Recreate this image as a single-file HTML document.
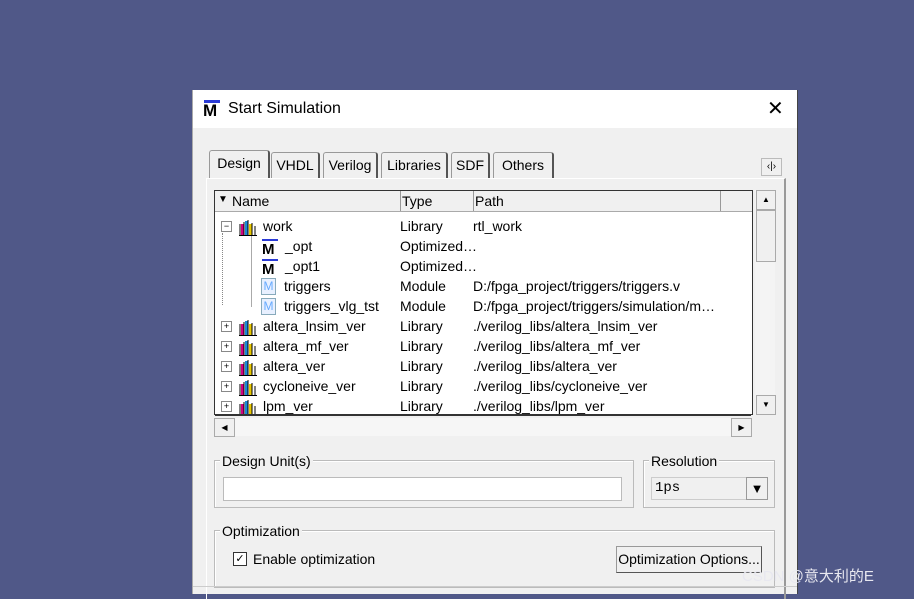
<!DOCTYPE html><html><head><style>
body{margin:0;width:914px;height:594px;background:#505888;position:relative;overflow:hidden;font-family:"Liberation Sans",sans-serif;font-size:14px;color:#000}
.a{position:absolute}
.dlg{left:192px;top:90px;width:604px;height:504px;background:#f0f0f0;border-left:1px solid #aaa;border-right:1px solid #444}
.title{left:0;top:0;width:604px;height:38px;background:#fff}
.tab{top:62px;height:26px;border:1px solid #999;border-bottom:none;border-right:2px solid #555;border-radius:3px 3px 0 0;background:#f0f0f0;text-align:center;line-height:24px;font-size:14px}
.row{height:20px;line-height:20px;white-space:nowrap}
.lib{display:inline-block;width:18px;height:16px;vertical-align:middle}
.grp{border:1px solid #bbb;box-shadow:inset 1px 1px #fff}
.lbl{background:#f0f0f0;padding:0 2px}
.pb{border:1px solid #888;background:#fff;width:9px;height:9px;font-size:9px;line-height:9px;text-align:center}
</style></head><body>
<div class="a dlg">
 <div class="a title">
  <div class="a" style="left:11px;top:10px;width:16px;height:3px;background:#2b3bd6"></div>
  <div class="a" style="left:10px;top:12px;font-weight:bold;font-size:17px;line-height:17px">M</div>
  <div class="a" style="left:35px;top:10px;font-size:16px">Start Simulation</div>
  <div class="a" style="left:574px;top:6px;font-size:20px">✕</div>
 </div>
 <div class="a tab" style="left:16px;width:58px;top:60px;height:28px;background:#f0f0f0">Design</div>
 <div class="a tab" style="left:78px;width:46px">VHDL</div>
 <div class="a tab" style="left:130px;width:52px">Verilog</div>
 <div class="a tab" style="left:188px;width:64px">Libraries</div>
 <div class="a tab" style="left:258px;width:36px">SDF</div>
 <div class="a tab" style="left:300px;width:58px">Others</div>
 <div class="a" style="left:568px;top:68px;width:19px;height:16px;border:1px solid #bbb;font-size:10px;line-height:16px;text-align:center">‹|›</div>
 <div class="a" style="left:13px;top:88px;width:577px;height:420px;border-left:1px solid #fff;border-top:1px solid #fff;border-right:2px solid #999"></div>
 <!-- list -->
 <div class="a" style="left:21px;top:100px;width:537px;height:223px;border:1px solid #333;background:#fff;overflow:hidden">
  <div class="a" style="left:0;top:0;width:537px;height:20px;background:#f0f0f0;border-bottom:1px solid #aaa"></div>
  <div class="a" style="left:3px;top:3px;font-size:10px">▼</div>
  <div class="a" style="left:17px;top:2px">Name</div>
  <div class="a" style="left:185px;top:0;height:20px;border-left:1px solid #999"></div>
  <div class="a" style="left:187px;top:2px">Type</div>
  <div class="a" style="left:258px;top:0;height:20px;border-left:1px solid #999"></div>
  <div class="a" style="left:260px;top:2px">Path</div>
  <div class="a" style="left:505px;top:0;height:20px;border-left:1px solid #999"></div>
  <div class="a" style="left:7px;top:42px;height:72px;border-left:1px dotted #888"></div>
  <div class="a" style="left:36px;top:37px;height:79px;border-left:1px solid #aaa"></div>
 </div>
 <div class="a" style="left:22px;top:126px;width:520px">
  <div class="row" style="position:relative"><span class="a pb" style="left:6px;top:5px">−</span><span class="a" style="left:24px;top:1px"><svg class="lib"><rect x="2" y="4" width="3" height="11" fill="#d00080"/><rect x="6" y="1" width="3" height="14" fill="#1a8ad8"/><rect x="10" y="4" width="3" height="11" fill="#e8c800"/><path d="M0 16h18" stroke="#000" stroke-width="2"/><path d="M1 4v12M5 2v14M9 0v16M13 3v13M16 6v10" stroke="#000"/></svg></span><span class="a" style="left:48px">work</span><span class="a" style="left:185px">Library</span><span class="a" style="left:258px">rtl_work</span></div>
  <div class="row" style="position:relative"><span class="a" style="left:47px;top:3px;width:16px;height:2px;background:#2b3bd6"></span><span class="a" style="left:47px;top:4px;font-weight:bold;font-size:15px">M</span><span class="a" style="left:70px">_opt</span><span class="a" style="left:185px">Optimized…</span></div>
  <div class="row" style="position:relative"><span class="a" style="left:47px;top:3px;width:16px;height:2px;background:#2b3bd6"></span><span class="a" style="left:47px;top:4px;font-weight:bold;font-size:15px">M</span><span class="a" style="left:70px">_opt1</span><span class="a" style="left:185px">Optimized…</span></div>
  <div class="row" style="position:relative"><span class="a" style="left:46px;top:2px;width:13px;height:15px;border:1px solid #8ab;background:#e8f0ff;color:#6af;font-size:12px;line-height:15px;text-align:center">M</span><span class="a" style="left:69px">triggers</span><span class="a" style="left:185px">Module</span><span class="a" style="left:258px">D:/fpga_project/triggers/triggers.v</span></div>
  <div class="row" style="position:relative"><span class="a" style="left:46px;top:2px;width:13px;height:15px;border:1px solid #8ab;background:#e8f0ff;color:#6af;font-size:12px;line-height:15px;text-align:center">M</span><span class="a" style="left:69px">triggers_vlg_tst</span><span class="a" style="left:185px">Module</span><span class="a" style="left:258px">D:/fpga_project/triggers/simulation/m…</span></div>
  <div class="row" style="position:relative"><span class="a pb" style="left:6px;top:5px">+</span><span class="a" style="left:24px;top:1px"><svg class="lib"><rect x="2" y="4" width="3" height="11" fill="#d00080"/><rect x="6" y="1" width="3" height="14" fill="#1a8ad8"/><rect x="10" y="4" width="3" height="11" fill="#e8c800"/><path d="M0 16h18" stroke="#000" stroke-width="2"/><path d="M1 4v12M5 2v14M9 0v16M13 3v13M16 6v10" stroke="#000"/></svg></span><span class="a" style="left:48px">altera_lnsim_ver</span><span class="a" style="left:185px">Library</span><span class="a" style="left:258px">./verilog_libs/altera_lnsim_ver</span></div>
  <div class="row" style="position:relative"><span class="a pb" style="left:6px;top:5px">+</span><span class="a" style="left:24px;top:1px"><svg class="lib"><rect x="2" y="4" width="3" height="11" fill="#d00080"/><rect x="6" y="1" width="3" height="14" fill="#1a8ad8"/><rect x="10" y="4" width="3" height="11" fill="#e8c800"/><path d="M0 16h18" stroke="#000" stroke-width="2"/><path d="M1 4v12M5 2v14M9 0v16M13 3v13M16 6v10" stroke="#000"/></svg></span><span class="a" style="left:48px">altera_mf_ver</span><span class="a" style="left:185px">Library</span><span class="a" style="left:258px">./verilog_libs/altera_mf_ver</span></div>
  <div class="row" style="position:relative"><span class="a pb" style="left:6px;top:5px">+</span><span class="a" style="left:24px;top:1px"><svg class="lib"><rect x="2" y="4" width="3" height="11" fill="#d00080"/><rect x="6" y="1" width="3" height="14" fill="#1a8ad8"/><rect x="10" y="4" width="3" height="11" fill="#e8c800"/><path d="M0 16h18" stroke="#000" stroke-width="2"/><path d="M1 4v12M5 2v14M9 0v16M13 3v13M16 6v10" stroke="#000"/></svg></span><span class="a" style="left:48px">altera_ver</span><span class="a" style="left:185px">Library</span><span class="a" style="left:258px">./verilog_libs/altera_ver</span></div>
  <div class="row" style="position:relative"><span class="a pb" style="left:6px;top:5px">+</span><span class="a" style="left:24px;top:1px"><svg class="lib"><rect x="2" y="4" width="3" height="11" fill="#d00080"/><rect x="6" y="1" width="3" height="14" fill="#1a8ad8"/><rect x="10" y="4" width="3" height="11" fill="#e8c800"/><path d="M0 16h18" stroke="#000" stroke-width="2"/><path d="M1 4v12M5 2v14M9 0v16M13 3v13M16 6v10" stroke="#000"/></svg></span><span class="a" style="left:48px">cycloneive_ver</span><span class="a" style="left:185px">Library</span><span class="a" style="left:258px">./verilog_libs/cycloneive_ver</span></div>
  <div class="row" style="position:relative"><span class="a pb" style="left:6px;top:5px">+</span><span class="a" style="left:24px;top:1px"><svg class="lib"><rect x="2" y="4" width="3" height="11" fill="#d00080"/><rect x="6" y="1" width="3" height="14" fill="#1a8ad8"/><rect x="10" y="4" width="3" height="11" fill="#e8c800"/><path d="M0 16h18" stroke="#000" stroke-width="2"/><path d="M1 4v12M5 2v14M9 0v16M13 3v13M16 6v10" stroke="#000"/></svg></span><span class="a" style="left:48px">lpm_ver</span><span class="a" style="left:185px">Library</span><span class="a" style="left:258px">./verilog_libs/lpm_ver</span></div>
 </div>
 <div class="a" style="left:22px;top:324px;width:536px;height:2px;background:#333"></div>
 <!-- vscroll -->
 <div class="a" style="left:562px;top:100px;width:20px;height:225px;background:#f4f4f4"></div>
 <div class="a" style="left:563px;top:100px;width:18px;height:18px;border:1px solid #aaa;background:#f0f0f0;font-size:8px;text-align:center;line-height:18px">▲</div>
 <div class="a" style="left:563px;top:120px;width:18px;height:50px;border:1px solid #aaa;background:#f0f0f0"></div>
 <div class="a" style="left:563px;top:305px;width:18px;height:18px;border:1px solid #aaa;background:#f0f0f0;font-size:8px;text-align:center;line-height:18px">▼</div>
 <!-- hscroll -->
 <div class="a" style="left:21px;top:328px;width:538px;height:18px;background:#f6f6f6"></div>
 <div class="a" style="left:21px;top:328px;width:19px;height:17px;border:1px solid #aaa;background:#f0f0f0;font-size:8px;text-align:center;line-height:17px">◀</div>
 <div class="a" style="left:538px;top:328px;width:19px;height:17px;border:1px solid #aaa;background:#f0f0f0;font-size:8px;text-align:center;line-height:17px">▶</div>
 <!-- groups -->
 <div class="a grp" style="left:21px;top:370px;width:418px;height:46px"></div>
 <div class="a lbl" style="left:27px;top:363px">Design Unit(s)</div>
 <div class="a" style="left:30px;top:387px;width:397px;height:22px;background:#fff;border:1px solid #bbb"></div>
 <div class="a grp" style="left:450px;top:370px;width:130px;height:46px"></div>
 <div class="a lbl" style="left:456px;top:363px">Resolution</div>
 <div class="a" style="left:458px;top:387px;width:92px;height:21px;border:1px solid #ccc;font-family:'Liberation Mono',monospace;font-size:14px;line-height:21px;padding-left:3px">1ps</div>
 <div class="a" style="left:553px;top:387px;width:20px;height:21px;border:1px solid #999;background:#f0f0f0;font-size:13px;line-height:21px;text-align:center">▼</div>
 <div class="a grp" style="left:21px;top:440px;width:559px;height:56px"></div>
 <div class="a lbl" style="left:27px;top:433px">Optimization</div>
 <div class="a" style="left:40px;top:462px;width:12px;height:12px;border:1px solid #333;background:#fff;font-size:11px;line-height:12px;text-align:center">✓</div>
 <div class="a" style="left:60px;top:461px">Enable optimization</div>
 <div class="a" style="left:423px;top:456px;width:144px;height:25px;border:1px solid #999;border-right-color:#555;border-bottom-color:#555;background:#f0f0f0;line-height:25px;text-align:center">Optimization Options...</div>
 <div class="a" style="left:0;top:496px;width:604px;height:2px;border-top:1px solid #ccc"></div>
</div>
<div class="a" style="left:742px;top:565px;color:#e8e8f0;font-size:15px;font-family:'Liberation Sans','Noto Sans CJK SC',sans-serif">CSDN @意大利的E</div>
</body></html>
